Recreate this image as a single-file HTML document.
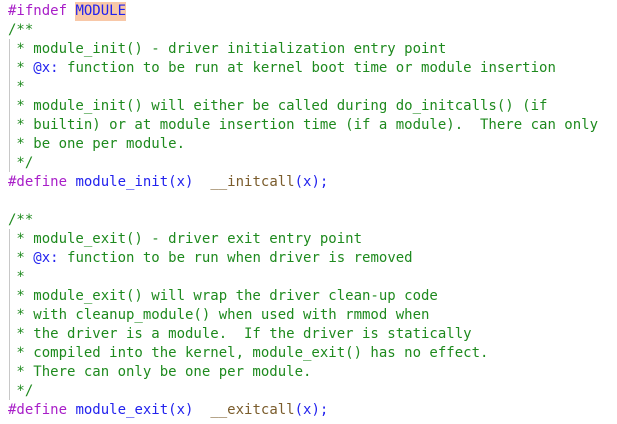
<!DOCTYPE html>
<html><head><style>
body{margin:0;background:#fff;width:617px;height:424px;overflow:hidden}
pre{margin:0;position:absolute;left:8px;top:2px;font-family:"DejaVu Sans Mono","Liberation Mono",monospace;font-size:14px;line-height:19px;color:#000}
.p{color:#a81ec8}.b{color:#2222ee}.g{color:#1e8a1e}.n{color:#7a5c2c}
.h{background:#f8c8a8;display:inline-block;height:19px;vertical-align:top}
.bar{position:absolute;left:9px;width:1px;background:#c8c8c8}
</style></head><body>
<div class="bar" style="top:39px;height:133px"></div>
<div class="bar" style="top:229px;height:171px"></div>
<pre><span class="p">#ifndef</span> <span class="b h">MODULE</span>
<span class="g">/**
 * module_init() - driver initialization entry point
 * <span class="b">@x:</span> function to be run at kernel boot time or module insertion
 *
 * module_init() will either be called during do_initcalls() (if
 * builtin) or at module insertion time (if a module).  There can only
 * be one per module.
 */</span>
<span class="p">#define</span> <span class="b">module_init(x)</span>  <span class="n">__initcall</span><span class="b">(x);</span>

<span class="g">/**
 * module_exit() - driver exit entry point
 * <span class="b">@x:</span> function to be run when driver is removed
 *
 * module_exit() will wrap the driver clean-up code
 * with cleanup_module() when used with rmmod when
 * the driver is a module.  If the driver is statically
 * compiled into the kernel, module_exit() has no effect.
 * There can only be one per module.
 */</span>
<span class="p">#define</span> <span class="b">module_exit(x)</span>  <span class="n">__exitcall</span><span class="b">(x);</span></pre>
</body></html>
